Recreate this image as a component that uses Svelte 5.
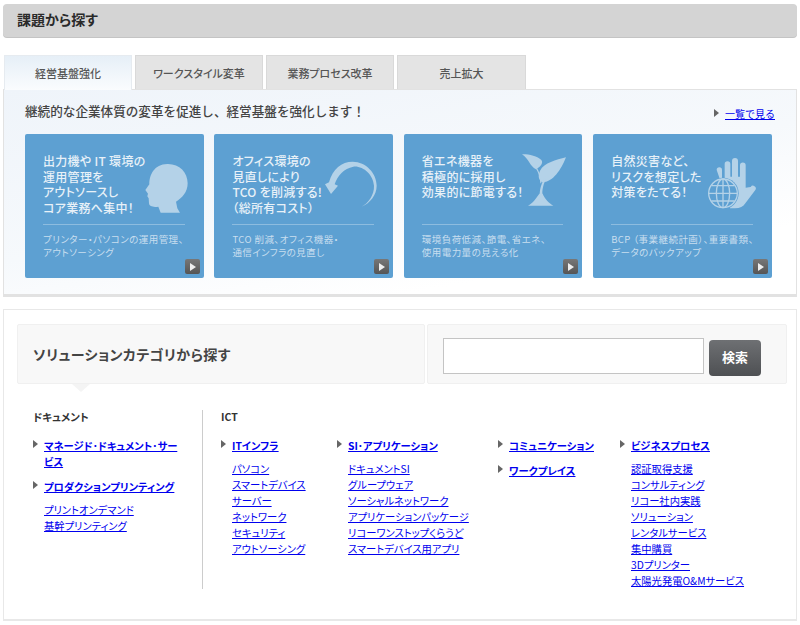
<script lang="ts">
    const tabs = ["経営基盤強化", "ワークスタイル変革", "業務プロセス改革", "売上拡大"];

    const cards = [
        {
            icon: "head",
            lines: ["出力機や IT 環境の", "運用管理を", "アウトソースし", "コア業務へ集中！"],
            sub: ["プリンター・パソコンの運用管理、", "アウトソーシング"],
        },
        {
            icon: "arrow",
            lines: ["オフィス環境の", "見直しにより", "TCO を削減する!", "（総所有コスト）"],
            sub: ["TCO 削減、オフィス機器・", "通信インフラの見直し"],
        },
        {
            icon: "plant",
            lines: ["省エネ機器を", "積極的に採用し", "効果的に節電する！"],
            sub: ["環境負荷低減、節電、省エネ、", "使用電力量の見える化"],
        },
        {
            icon: "hand",
            lines: ["自然災害など、", "リスクを想定した", "対策をたてる！"],
            sub: ["BCP （事業継続計画）、重要書類、", "データのバックアップ"],
        },
    ];

    const ictColumns = [
        {
            width: 116,
            groups: [
                {
                    title: "ITインフラ",
                    links: ["パソコン", "スマートデバイス", "サーバー", "ネットワーク", "セキュリティ", "アウトソーシング"],
                },
            ],
        },
        {
            width: 161,
            groups: [
                {
                    title: "SI･アプリケーション",
                    links: ["ドキュメントSI", "グループウェア", "ソーシャルネットワーク", "アプリケーションパッケージ", "リコーワンストップくらうど", "スマートデバイス用アプリ"],
                },
            ],
        },
        {
            width: 122,
            groups: [
                { title: "コミュニケーション", links: [] },
                { title: "ワークプレイス", links: [] },
            ],
        },
        {
            width: 140,
            groups: [
                {
                    title: "ビジネスプロセス",
                    links: ["認証取得支援", "コンサルティング", "リコー社内実践", "ソリューション", "レンタルサービス", "集中購買", "3Dプリンター", "太陽光発電O&Mサービス"],
                },
            ],
        },
    ];
</script>

<div class="page">
    <h2 class="title-bar">課題から探す</h2>

    <div class="tabs">
        {#each tabs as tab, i}
            <div class="tab" class:active={i === 0}>{tab}</div>
        {/each}
    </div>

    <section class="panel">
        <div class="panel-head">
            <p class="lead">継続的な企業体質の変革を促進し、経営基盤を強化します！</p>
            <span class="more"><i class="arrow"></i><a href="#top">一覧で見る</a></span>
        </div>

        <div class="cards">
            {#each cards as card}
                <div class="card">
                    <div class="card-main">
                        {#each card.lines as line}
                            <div>{line}</div>
                        {/each}
                    </div>
                    <div class="card-sub">
                        {#each card.sub as line}
                            <div>{line}</div>
                        {/each}
                    </div>

                    {#if card.icon === "head"}
                        <svg class="icon icon-head" viewBox="0 0 180 195" width="60" height="65">
                            <path d="M16 105 L28 88 C28 60 42 28 82 27 C118 26 143 52 143 85 C143 112 125 130 108 140 L112 160 L120 173 L62 173 L55 155 C40 157 28 155 27 145 L26 130 L22 124 L24 116 Z" />
                        </svg>
                    {:else if card.icon === "arrow"}
                        <svg class="icon icon-arrow" viewBox="0 0 195 195" width="65" height="65">
                            <path d="M124 155 C150 145 170 120 170 92 C170 55 138 20 98 20 C65 20 38 42 27 82 L15 88 L33 117 L54 92 L44 88 C52 62 72 40 100 35 C130 32 160 60 162 92 C163 120 145 145 124 155 Z" />
                        </svg>
                    {:else if card.icon === "plant"}
                        <svg class="icon icon-plant" viewBox="0 0 180 195" width="60" height="65">
                            <path d="M18 13 C35 12 65 18 76 30 C84 40 70 52 60 58 C42 50 38 25 18 13 Z" />
                            <path d="M150 22 C120 30 85 38 72 62 C65 78 68 88 78 97 C110 98 135 60 150 22 Z" />
                            <path d="M60 56 C68 68 72 84 73 100 L76 100 C76 84 70 66 63 54 Z" />
                            <path d="M95 74 C78 92 72 112 71 133 L79 133 C79 112 84 94 98 77 Z" />
                            <path d="M36 167 C50 160 60 145 70 131 L80 131 C85 145 100 160 112 167 Z" />
                        </svg>
                    {:else}
                        <svg class="icon icon-hand" viewBox="0 0 195 195" width="65" height="65">
                            <path d="M50 60 a8 8 0 0 1 16 0 V85 H74 V42 a8 8 0 0 1 17 0 V80 H96 V33 a9 9 0 0 1 18 0 V80 H120 V46 a8 8 0 0 1 17 0 V113 L152 111 a7 7 0 0 1 14 9 L136 160 C130 170 120 175 105 175 H90 Z" />
                            <circle class="globe-bg" cx="69" cy="130" r="47" />
                            <g class="globe">
                                <circle cx="69" cy="130" r="43" />
                                <ellipse cx="69" cy="130" rx="20" ry="43" />
                                <path d="M69 87 V173 M26 130 H112 M34 107 H104 M34 153 H104" />
                            </g>
                        </svg>
                    {/if}

                    <span class="play"><i></i></span>
                </div>
            {/each}
        </div>
    </section>

    <section class="solutions">
        <div class="search-row">
            <div class="search-title">
                <h3>ソリューションカテゴリから探す</h3>
            </div>
            <div class="search-box">
                <input type="text" />
                <button type="button">検索</button>
            </div>
        </div>

        <div class="categories">
            <div class="cat-doc">
                <h4>ドキュメント</h4>
                <div class="group">
                    <a class="group-title" href="#top"><i class="arrow"></i>マネージド･ドキュメント･サービス</a>
                </div>
                <div class="group">
                    <a class="group-title" href="#top"><i class="arrow"></i>プロダクションプリンティング</a>
                    <ul>
                        <li><a href="#top">プリントオンデマンド</a></li>
                        <li><a href="#top">基幹プリンティング</a></li>
                    </ul>
                </div>
            </div>

            <div class="cat-ict">
                <h4>ICT</h4>
                <div class="ict-columns">
                    {#each ictColumns as col}
                        <div style="width: {col.width}px">
                            {#each col.groups as group}
                                <div class="group">
                                    <a class="group-title" href="#top"><i class="arrow"></i>{group.title}</a>
                                    {#if group.links.length}
                                        <ul>
                                            {#each group.links as link}
                                                <li><a href="#top">{link}</a></li>
                                            {/each}
                                        </ul>
                                    {/if}
                                </div>
                            {/each}
                        </div>
                    {/each}
                </div>
            </div>
        </div>
    </section>
</div>

<style>
    :global(body) {
        margin: 0;
        background: #fff;
        font-family: "Noto Sans CJK JP", "Liberation Sans", sans-serif;
        font-feature-settings: "palt";
    }

    .page {
        width: 794px;
        height: 621px;
        padding: 4px 3px 0;
        overflow: hidden;
    }

    .title-bar {
        height: 33px;
        margin: 0 0 18px;
        padding-left: 14px;
        background: #d4d4d4;
        border-radius: 4px;
        box-shadow: 0 1px 0 #c4c4c4;
        color: #2a2a2a;
        font-size: 14px;
        font-weight: 700;
        line-height: 31px;
    }

    .tabs {
        display: flex;
        gap: 3px;
        height: 34px;
        padding-left: 1px;
    }

    .tab {
        width: 128px;
        box-sizing: border-box;
        background: #e4e4e4;
        border: 1px solid #d9d9d9;
        border-bottom: none;
        color: #555;
        font-size: 11px;
        font-weight: 500;
        line-height: 35px;
        text-align: center;
    }

    .tab:last-child {
        width: 129px;
    }

    .tab.active {
        position: relative;
        z-index: 1;
        height: 35px;
        background: linear-gradient(#e6eff7, #fafcfe);
        border-color: #e6ebf0;
    }

    .panel {
        box-sizing: border-box;
        height: 208px;
        padding: 0 21px;
        background: linear-gradient(170deg, #eff4fa, #f6f9fc 50%, #fff 80%);
        border: 1px solid #e2e2e2;
        border-bottom-width: 3px;
    }

    .panel-head {
        display: flex;
        align-items: center;
        justify-content: space-between;
        height: 44px;
    }

    .lead {
        margin: -3px 0 0;
        color: #444;
        font-feature-settings: normal;
        font-size: 12.6px;
        font-weight: 500;
    }

    .more {
        display: flex;
        align-items: center;
        gap: 6px;
        margin-top: 2px;
        font-feature-settings: normal;
        font-size: 10px;
    }

    a {
        color: #00e;
        text-decoration: underline;
    }

    .arrow {
        display: inline-block;
        width: 0;
        height: 0;
        border-left: 5px solid #666;
        border-top: 4px solid transparent;
        border-bottom: 4px solid transparent;
    }

    .cards {
        display: grid;
        grid-template-columns: repeat(4, 178.5px);
        column-gap: 10.9px;
    }

    .card {
        position: relative;
        box-sizing: border-box;
        height: 144px;
        padding: 19px 19px 0 18px;
        background: #5da0d2;
        border-radius: 2px;
        color: #e8f1f8;
    }

    .card-main {
        height: 71px;
        font-size: 12px;
        font-weight: 500;
        line-height: 15.6px;
        letter-spacing: 0.3px;
        white-space: nowrap;
    }

    .card-sub {
        padding-top: 8px;
        border-top: 1px solid #8dbcdf;
        color: #c8deef;
        font-size: 9.5px;
        line-height: 13px;
        letter-spacing: 0.45px;
        white-space: nowrap;
    }

    .icon {
        position: absolute;
        fill: #b4d2e8;
    }

    .icon-head {
        left: 115px;
        top: 21px;
    }

    .icon-arrow {
        left: 106px;
        top: 21px;
    }

    .icon-plant {
        left: 112px;
        top: 16px;
    }

    .icon-hand {
        left: 107px;
        top: 16px;
    }

    .globe-bg {
        fill: #5da0d2;
    }

    .globe {
        fill: none;
        stroke: #b4d2e8;
        stroke-width: 4;
    }

    .play {
        position: absolute;
        right: 4px;
        bottom: 4px;
        display: flex;
        align-items: center;
        justify-content: center;
        width: 15px;
        height: 15px;
        background: linear-gradient(#777, #555);
        border-radius: 2px;
    }

    .play i {
        margin-left: 1px;
        border-left: 6px solid #eee;
        border-top: 4.5px solid transparent;
        border-bottom: 4.5px solid transparent;
    }

    .solutions {
        box-sizing: border-box;
        height: 312px;
        margin-top: 12px;
        padding: 14px 9px 0 13px;
        border: 1px solid #e8e8e8;
        border-bottom-width: 2px;
    }

    .search-row {
        display: flex;
        gap: 2px;
        height: 60px;
    }

    .search-title,
    .search-box {
        box-sizing: border-box;
        background: #f8f8f8;
        border: 1px solid #f0f0f0;
        border-radius: 2px;
    }

    .search-title {
        position: relative;
        display: flex;
        align-items: center;
        width: 408px;
        padding-left: 15px;
    }

    .search-title::after {
        content: "";
        position: absolute;
        left: 54px;
        bottom: -9px;
        border-top: 8px solid #f4f4f4;
        border-left: 9px solid transparent;
        border-right: 9px solid transparent;
    }

    .search-title h3 {
        margin: 0;
        color: #444;
        font-size: 14px;
        font-weight: 700;
        letter-spacing: 0.4px;
    }

    .search-box {
        display: flex;
        flex: 1;
        align-items: flex-start;
        gap: 5px;
        padding: 13px 0 0 15px;
    }

    input {
        box-sizing: border-box;
        width: 261px;
        height: 36px;
        margin: 0;
        background: #fff;
        border: 1px solid #c4c4c4;
    }

    button {
        width: 52px;
        height: 36px;
        margin-top: 2px;
        padding: 0 0 4px;
        background: linear-gradient(#6e7073, #4e5053);
        border: none;
        border-radius: 4px;
        color: #fff;
        font-family: inherit;
        font-size: 13px;
        font-weight: 700;
    }

    .categories {
        display: flex;
        margin-top: 26px;
    }

    h4 {
        margin: 0 0 14px;
        color: #333;
        font-size: 10.5px;
        font-weight: 700;
        line-height: 14px;
    }

    .cat-doc {
        box-sizing: border-box;
        width: 186px;
        height: 179px;
        padding: 0 20px 0 16px;
        border-right: 1px solid #ccc;
    }

    .cat-ict {
        padding-left: 18px;
    }

    .ict-columns {
        display: flex;
    }

    .group {
        margin-bottom: 9px;
    }

    .group-title {
        position: relative;
        display: block;
        padding-left: 11px;
        font-size: 10.3px;
        font-weight: 700;
        line-height: 16px;
    }

    .group-title .arrow {
        position: absolute;
        left: 0;
        top: 2px;
    }

    ul {
        margin: 7px 0 0;
        padding: 0 0 0 11px;
        list-style: none;
    }

    li {
        font-size: 10.3px;
        line-height: 16px;
        white-space: nowrap;
    }
</style>
